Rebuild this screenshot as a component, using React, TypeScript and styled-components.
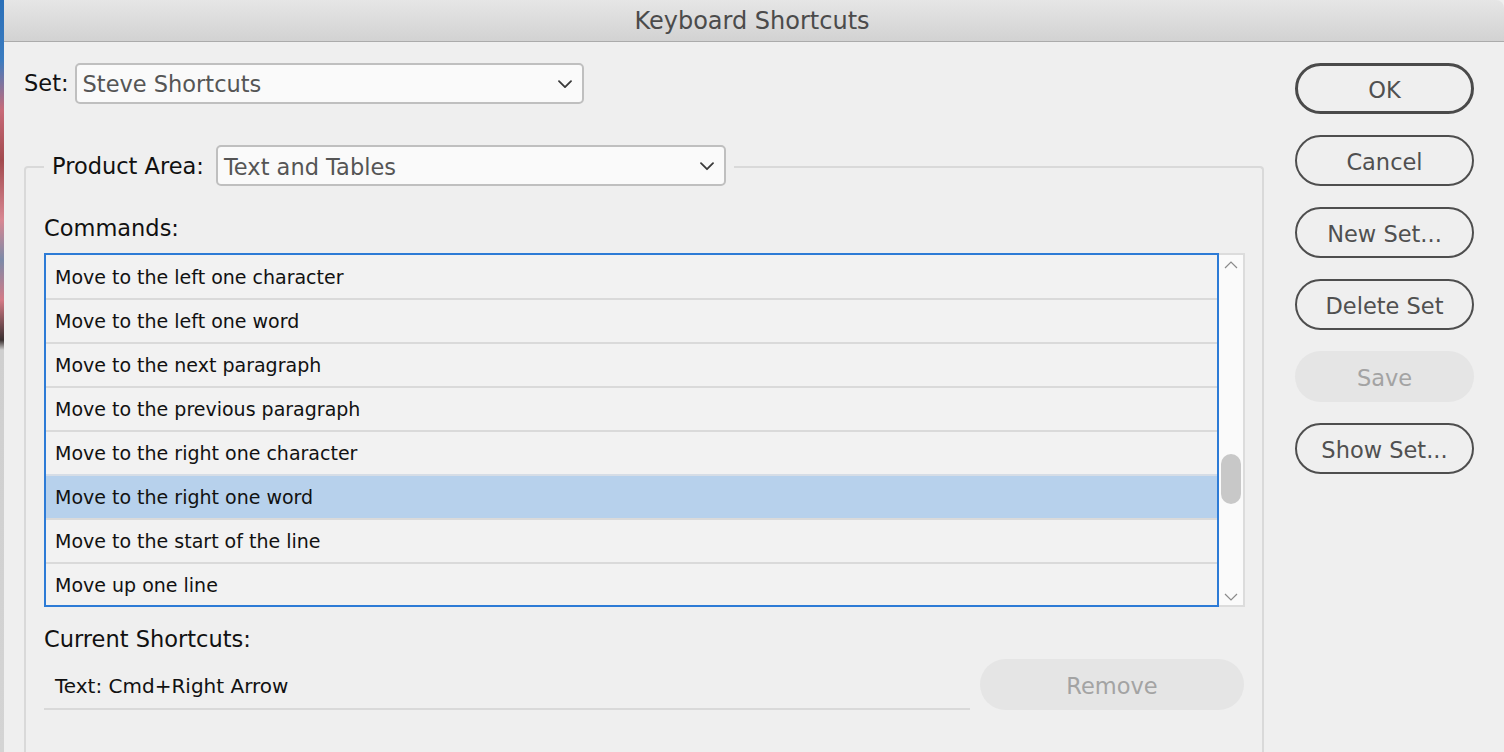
import React from "react";
import styled, { createGlobalStyle } from "styled-components";

const Global = createGlobalStyle`
  html, body { margin: 0; padding: 0; background: #efefef; }
  body { font-family: "DejaVu Sans", "Liberation Sans", sans-serif; overflow: hidden; }
  * { box-sizing: border-box; }
`;

const Screen = styled.div`
  width: 1504px;
  height: 752px;
  display: flex;
  overflow: hidden;
`;

const Desktop = styled.div`
  width: 4px;
  flex: none;
  background: linear-gradient(
    to bottom,
    #2a6fb8 0px,
    #3b7cc0 60px,
    #c86a78 110px,
    #a24a4e 160px,
    #d88792 220px,
    #7c8aa8 260px,
    #d47a86 300px,
    #3a3030 340px,
    #cfcfcf 350px,
    #d4d4d4 752px
  );
`;

const Window = styled.div`
  flex: 1;
  display: flex;
  flex-direction: column;
  background: #efefef;
  border-top-right-radius: 8px;
  overflow: hidden;
`;

const TitleBar = styled.div`
  height: 42px;
  flex: none;
  display: flex;
  align-items: center;
  justify-content: center;
  background: linear-gradient(to bottom, #e6e6e6, #d2d2d2);
  border-bottom: 1px solid #ababab;
  color: #4b4b4b;
  font-size: 24px;
  padding-right: 4px;
`;

const Body = styled.div`
  flex: 1;
  display: flex;
  padding: 20px 30px 0 20px;
  gap: 31px;
`;

const MainCol = styled.div`
  flex: 1;
  display: flex;
  flex-direction: column;
`;

const SetRow = styled.div`
  display: flex;
  align-items: center;
  gap: 6px;
  height: 42px;
`;

const Label = styled.span`
  color: #111;
  font-size: 22.5px;
`;

const Select = styled.div<{ $w: number }>`
  width: ${(p) => p.$w}px;
  height: 41px;
  border: 2px solid #bfbfbf;
  border-radius: 5px;
  background: #fafafa;
  display: flex;
  align-items: center;
  justify-content: space-between;
  padding: 2px 10px 0 6px;
  color: #555;
  font-size: 22.5px;
`;

const Group = styled.div`
  margin-top: 62px;
  flex: 1;
  border: 2px solid #d9d9d9;
  border-bottom: none;
  border-radius: 4px 4px 0 0;
  position: relative;
  padding: 47px 17px 0 18px;
  display: flex;
  flex-direction: column;
`;

const Legend = styled.div`
  position: absolute;
  top: -23px;
  left: 18px;
  display: flex;
  align-items: center;
  gap: 12px;
  padding: 0 8px;
  background: #efefef;
`;

const SectionLabel = styled.div<{ $mt?: number }>`
  color: #111;
  font-size: 22.5px;
  margin-top: ${(p) => p.$mt ?? 0}px;
  height: 26px;
  line-height: 26px;
`;

const ListWrap = styled.div`
  margin-top: 12px;
  display: flex;
  height: 354px;
  flex: none;
`;

const List = styled.div`
  flex: 1;
  border: 2px solid #2d7bd6;
  display: flex;
  flex-direction: column;
  overflow: hidden;
  background: #f2f2f2;
`;

const Row = styled.div<{ $sel?: boolean }>`
  height: 44px;
  flex: none;
  display: flex;
  align-items: center;
  padding-left: 9px;
  font-size: 19px;
  color: #111;
  background: ${(p) => (p.$sel ? "#b7d1ec" : "#f2f2f2")};
  border-top: 2px solid ${(p) => (p.$sel ? "#d6dde6" : "#dadada")};
  &:first-child {
    border-top: none;
    height: 43px;
  }
`;

const Scroll = styled.div`
  width: 26px;
  flex: none;
  background: #fafafa;
  border: 2px solid #dcdcdc;
  border-left: none;
  display: flex;
  flex-direction: column;
  align-items: center;
  justify-content: space-between;
  padding: 6px 0 4px;
  position: relative;
`;

const Thumb = styled.div`
  position: absolute;
  left: 2px;
  top: 199px;
  width: 20px;
  height: 50px;
  border-radius: 10px;
  background: #c8c8c8;
`;

const ShortcutRow = styled.div`
  margin-top: 7px;
  display: flex;
  align-items: center;
  gap: 10px;
`;

const ShortcutField = styled.div`
  width: 926px;
  height: 50px;
  border-bottom: 2px solid #d9d9d9;
  display: flex;
  align-items: center;
  padding: 4px 0 0 11px;
  font-size: 20px;
  color: #111;
`;

const Pill = styled.button<{ $w?: number; $disabled?: boolean; $default?: boolean }>`
  width: ${(p) => p.$w ?? 179}px;
  height: 51px;
  border-radius: 26px;
  font-family: inherit;
  font-size: 22.5px;
  background: ${(p) => (p.$disabled ? "#e5e5e5" : "transparent")};
  color: ${(p) => (p.$disabled ? "#a3a3a3" : "#505050")};
  border: ${(p) =>
    p.$disabled ? "none" : p.$default ? "3px solid #4a4a4a" : "2px solid #4e4e4e"};
  display: flex;
  align-items: center;
  justify-content: center;
  padding: 3px 0 0;
  flex: none;
`;

const SideCol = styled.div`
  width: 179px;
  display: flex;
  flex-direction: column;
  gap: 21px;
  padding-top: 1px;
`;

const Chevron = ({ size = 14, color = "#3a3a3a" }: { size?: number; color?: string }) => (
  <svg width={size} height={size * 0.6} viewBox="0 0 14 8" fill="none">
    <path d="M1 1 L7 7 L13 1" stroke={color} strokeWidth={1.8} strokeLinecap="round" strokeLinejoin="round" />
  </svg>
);

const ArrowUp = () => (
  <svg width="14" height="8" viewBox="0 0 14 8" fill="none">
    <path d="M1 7 L7 1 L13 7" stroke="#8a8a8a" strokeWidth={1.2} />
  </svg>
);
const ArrowDown = () => (
  <svg width="14" height="8" viewBox="0 0 14 8" fill="none">
    <path d="M1 1 L7 7 L13 1" stroke="#8a8a8a" strokeWidth={1.2} />
  </svg>
);

const commands = [
  "Move to the left one character",
  "Move to the left one word",
  "Move to the next paragraph",
  "Move to the previous paragraph",
  "Move to the right one character",
  "Move to the right one word",
  "Move to the start of the line",
  "Move up one line",
];

export default function App() {
  return (
    <Screen>
      <Global />
      <Desktop />
      <Window>
        <TitleBar>Keyboard Shortcuts</TitleBar>
        <Body>
          <MainCol>
            <SetRow>
              <Label>Set:</Label>
              <Select $w={509}>
                <span>Steve Shortcuts</span>
                <Chevron />
              </Select>
            </SetRow>
            <Group>
              <Legend>
                <Label>Product Area:</Label>
                <Select $w={510}>
                  <span>Text and Tables</span>
                  <Chevron />
                </Select>
              </Legend>
              <SectionLabel>Commands:</SectionLabel>
              <ListWrap>
                <List>
                  {commands.map((c, i) => (
                    <Row key={c} $sel={i === 5}>
                      {c}
                    </Row>
                  ))}
                </List>
                <Scroll>
                  <ArrowUp />
                  <Thumb />
                  <ArrowDown />
                </Scroll>
              </ListWrap>
              <SectionLabel $mt={19}>Current Shortcuts:</SectionLabel>
              <ShortcutRow>
                <ShortcutField>Text: Cmd+Right Arrow</ShortcutField>
                <Pill $w={264} $disabled>
                  Remove
                </Pill>
              </ShortcutRow>
            </Group>
          </MainCol>
          <SideCol>
            <Pill $default>OK</Pill>
            <Pill>Cancel</Pill>
            <Pill>New Set...</Pill>
            <Pill>Delete Set</Pill>
            <Pill $disabled>Save</Pill>
            <Pill>Show Set...</Pill>
          </SideCol>
        </Body>
      </Window>
    </Screen>
  );
}
